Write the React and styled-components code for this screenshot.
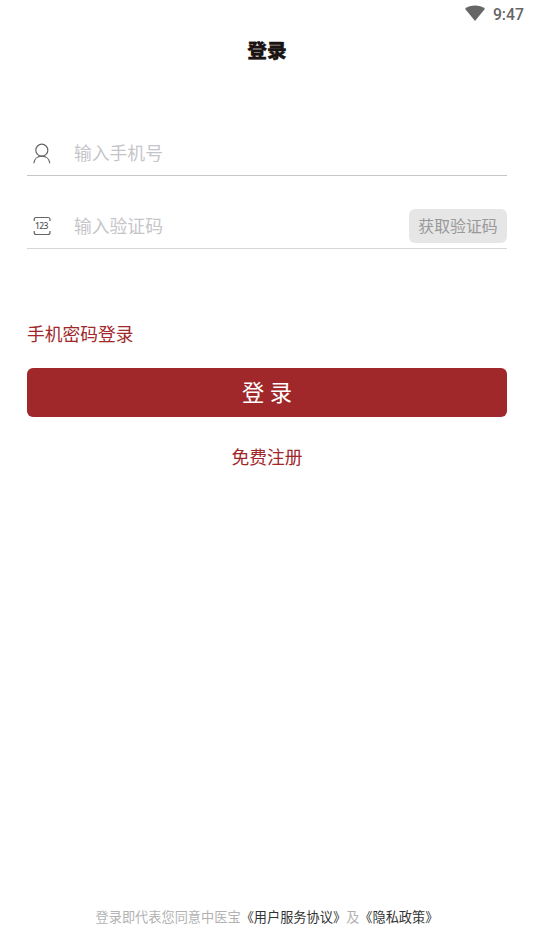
import React, { useState } from 'react';
import styled, { createGlobalStyle } from 'styled-components';

const GlobalStyle = createGlobalStyle`
  * {
    box-sizing: border-box;
  }

  body {
    margin: 0;
    background: #fff;
    font-family: 'Noto Sans CJK SC', sans-serif;
  }
`;

const Page = styled.div`
  display: flex;
  flex-direction: column;
  height: 949px;
  overflow: hidden;
`;

const StatusBar = styled.div`
  display: flex;
  justify-content: flex-end;
  align-items: center;
  gap: 8px;
  height: 28px;
  padding: 2px 10px 0 0;
  color: #666;
  font: 500 15.8px/26px Roboto, sans-serif;

  svg {
    margin-bottom: 4px;
  }
`;

const Title = styled.h1`
  margin: 0;
  height: 46px;
  color: #1a1311;
  font-size: 19.8px;
  font-weight: 900;
  line-height: 44px;
  text-align: center;
  -webkit-text-stroke: 0.3px #1a1311;
`;

const Form = styled.form`
  display: flex;
  flex-direction: column;
  padding: 56px 27px 0;
`;

const Field = styled.div`
  display: flex;
  align-items: center;
  height: ${(props) => (props.$first ? '46px' : '45px')};
  border-bottom: 1px solid ${(props) => (props.$first ? '#c6c6c6' : '#d6d6d6')};

  & + & {
    margin-top: 28px;
  }

  & > svg {
    flex: none;
    margin-left: 6px;
  }
`;

const Input = styled.input`
  flex: 1;
  min-width: 0;
  height: 36px;
  margin-left: 23px;
  padding: 0 0 2px;
  border: none;
  outline: none;
  background: none;
  color: #333;
  font-family: inherit;
  font-size: 17.8px;

  &::placeholder {
    color: #c5c5c9;
  }
`;

const CodeButton = styled.button`
  width: 98px;
  height: 34px;
  padding: 0 0 1px;
  border: none;
  border-radius: 6px;
  background: #e6e6e6;
  color: #999;
  font-family: inherit;
  font-size: 15.9px;
`;

const TextLink = styled.a`
  align-self: ${(props) => (props.$center ? 'center' : 'flex-start')};
  margin-top: ${(props) => (props.$center ? '25px' : '70px')};
  color: #a0272a;
  font-size: 17.75px;
  line-height: 28px;
`;

const SubmitButton = styled.button`
  height: 49px;
  margin-top: 21px;
  padding: 0 0 3px;
  border: none;
  border-radius: 6px;
  background: #a0272a;
  color: #fff;
  font-family: inherit;
  font-size: 22.3px;
  word-spacing: 0.6px;
`;

const Agreement = styled.p`
  margin: auto 0 22px;
  color: #b2b2b2;
  font-size: 13.2px;
  line-height: 20px;
  text-align: center;
  white-space: nowrap;
`;

const Policy = styled.span`
  color: #333;
`;

const WifiIcon = () => (
  <svg width="20" height="16" viewBox="0 0 20 16">
    <path d="M0 3.8Q4.3 0.5 10 0.5T20 3.8L10 16Z" fill="#666" />
  </svg>
);

const UserIcon = () => (
  <svg width="18" height="22" viewBox="0 0 18 22" fill="none" stroke="#666" strokeWidth="1.2">
    <circle cx="8.8" cy="8.2" r="6" />
    <path d="M0.8 21.2C1.2 17 4.5 14.2 8.8 14.2S16.4 17 16.8 21.2" />
  </svg>
);

const CodeIcon = () => (
  <svg width="18" height="20" viewBox="0 0 18 20" fill="none" stroke="#666" strokeWidth="1.2">
    <path d="M1.2 5V3.5Q1.2 1.5 3.2 1.5H15Q17 1.5 17 3.5V5M1.2 15V16.5Q1.2 18.5 3.2 18.5H15Q17 18.5 17 16.5V15" />
    <text
      x="8.6"
      y="13"
      fill="#555"
      stroke="none"
      fontSize="8.5"
      fontWeight="500"
      fontFamily="Noto Sans"
      textAnchor="middle"
      textLength="13.4"
    >
      123
    </text>
  </svg>
);

const App = () => {
  const [form, setForm] = useState({ phone: '', code: '' });

  const onChange = (e) => {
    const { name, value } = e.target;
    setForm((prev) => ({ ...prev, [name]: value }));
  };

  return (
    <Page>
      <GlobalStyle />
      <StatusBar>
        <WifiIcon />
        9:47
      </StatusBar>
      <Title>登录</Title>
      <Form onSubmit={(e) => e.preventDefault()}>
        <Field $first>
          <UserIcon />
          <Input
            type="tel"
            name="phone"
            placeholder="输入手机号"
            onChange={onChange}
            value={form.phone}
          />
        </Field>
        <Field>
          <CodeIcon />
          <Input
            type="text"
            name="code"
            placeholder="输入验证码"
            onChange={onChange}
            value={form.code}
          />
          <CodeButton type="button">获取验证码</CodeButton>
        </Field>
        <TextLink>手机密码登录</TextLink>
        <SubmitButton type="submit">登 录</SubmitButton>
        <TextLink $center>免费注册</TextLink>
      </Form>
      <Agreement>
        登录即代表您同意中医宝<Policy>《用户服务协议》</Policy>及<Policy>《隐私政策》</Policy>
      </Agreement>
    </Page>
  );
};

export default App;
